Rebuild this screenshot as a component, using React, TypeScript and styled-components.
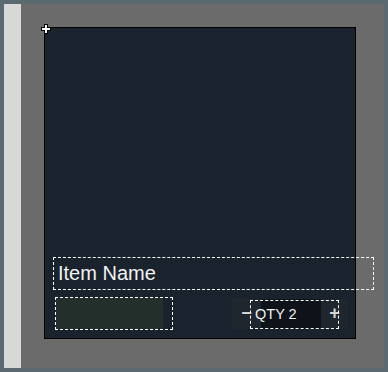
import React from "react";
import styled, { createGlobalStyle } from "styled-components";

const GlobalStyle = createGlobalStyle`
  html, body {
    margin: 0;
    padding: 0;
    background: #5b6a70;
    font-family: "Liberation Sans", Arial, sans-serif;
  }
`;

const Frame = styled.div`
  display: flex;
  width: 380px;
  height: 364px;
  margin: 4px;
`;

const SideStrip = styled.div`
  width: 17px;
  background: #d8d8d8;
`;

const Stage = styled.div`
  flex: 1;
  background: #6b6b6b;
  padding: 23px 0 0 23px;
`;

const Card = styled.div`
  position: relative;
  box-sizing: border-box;
  width: 312px;
  height: 312px;
  border: 1px solid #000;
  background: #1a232d;
  display: flex;
  flex-direction: column;
  justify-content: flex-end;
  gap: 7px;
  padding-bottom: 8px;
`;

// handle drawn at the card's top-left corner
const Crosshair = styled.svg`
  position: absolute;
  left: -4px;
  top: -4px;
`;

const Selected = styled.div`
  box-sizing: border-box;
  border: 1px dashed #ffffff;
`;

const NameBox = styled(Selected)`
  width: 321px;
  height: 33px;
  margin-left: 8px;
  display: flex;
  align-items: center;
  padding-left: 4px;
  color: #f2f2f2;
  font-size: 20px;
`;

const BottomRow = styled.div`
  display: flex;
  align-items: center;
  justify-content: space-between;
  padding: 0 7px 0 10px;
`;

const PriceBox = styled(Selected)`
  width: 118px;
  height: 33px;
`;

const PriceFill = styled.div`
  width: 107px;
  height: 100%;
  background: #232f2b;
`;

const Stepper = styled.div`
  position: relative;
  display: flex;
  width: 116px;
  height: 30px;
  background: #1f262d;
`;

const StepButton = styled.div<{ $w: number }>`
  width: ${(p) => p.$w}px;
  display: flex;
  align-items: center;
  justify-content: center;
  color: #d4d4d4;
  font-size: 18px;
  font-weight: bold;
`;

const QtyField = styled.div`
  width: 60px;
  background: #0d1318;
`;

const QtyLabel = styled(Selected)`
  position: absolute;
  left: 18px;
  top: 1px;
  width: 89px;
  height: 29px;
  display: flex;
  align-items: center;
  padding-left: 4px;
  color: #f0f0f0;
  font-size: 14.5px;
`;

export default function App() {
  return (
    <>
      <GlobalStyle />
      <Frame>
        <SideStrip />
        <Stage>
          <Card>
            <Crosshair width="10" height="10" viewBox="0 0 10 10">
              <path d="M3 0h4v3h3v4H7v3H3V7H0V3h3z" fill="#000" />
              <path d="M4 1h2v3h3v2H6v3H4V6H1V4h3z" fill="#fff" />
            </Crosshair>
            <NameBox>Item Name</NameBox>
            <BottomRow>
              <PriceBox>
                <PriceFill />
              </PriceBox>
              <Stepper>
                <StepButton $w={29}>−</StepButton>
                <QtyField />
                <StepButton $w={27}>+</StepButton>
                <QtyLabel>QTY 2</QtyLabel>
              </Stepper>
            </BottomRow>
          </Card>
        </Stage>
      </Frame>
    </>
  );
}
